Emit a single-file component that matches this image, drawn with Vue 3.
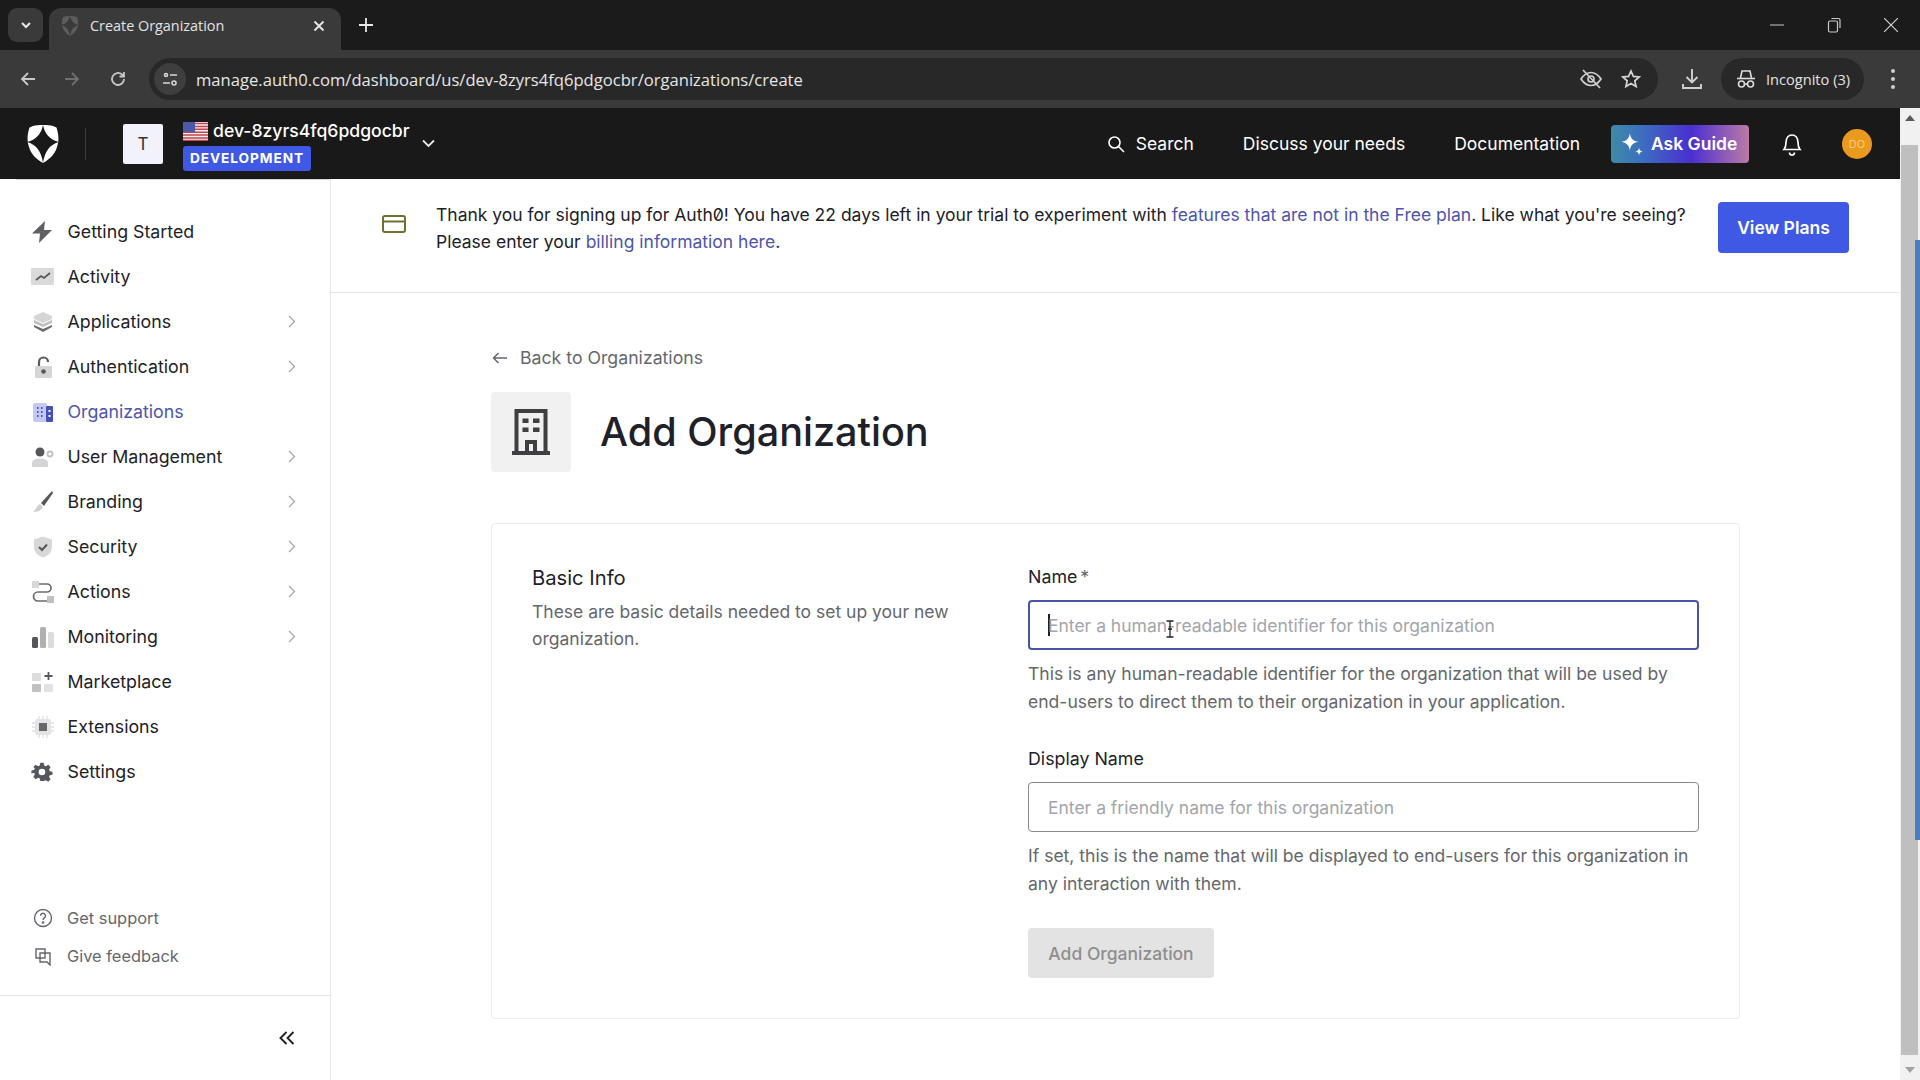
<template>
  <div class="page">
    <!-- browser chrome -->
    <div class="tabstrip">
      <div class="tab-menu">
        <svg width="12" height="12" viewBox="0 0 12 12" fill="none" stroke="#e8e8e8" stroke-width="2"><path d="M2 4l4 4 4-4" /></svg>
      </div>
      <div class="tab">
        <svg class="tab-fav" width="18" height="20" viewBox="0 0 32 38" fill="#5c5c5c"><path fill-rule="evenodd" d="M6 1C11-.3 21-.3 26 1l3.500 1.500C32 10 32 16 30 22c-2 7-7 12-14 16C9 34 4 29 2 22 0 16 0 10 2.500 2.500zM16 0q2.500 13.500 16 17-13.500 3.500-16 21-2.500-17.500-16-21Q13.500 13.500 16 0z" /></svg>
        <span class="tab-title">Create Organization</span>
        <svg class="tab-x" width="12" height="12" viewBox="0 0 12 12" stroke="#e8e8e8" stroke-width="1.8"><path d="M1.5 1.5l9 9M10.5 1.5l-9 9" /></svg>
      </div>
      <svg class="tab-plus" width="14" height="14" viewBox="0 0 14 14" stroke="#e8e8e8" stroke-width="1.8"><path d="M7 0v14M0 7h14" /></svg>
      <div class="win-btns">
        <svg width="14" height="14" viewBox="0 0 14 14" stroke="#c8c8c8" stroke-width="1"><path d="M0 7h14" /></svg>
        <svg width="14" height="16" viewBox="0 0 14 16" fill="none" stroke="#c8c8c8" stroke-width="1.2"><rect x="1.5" y="4" width="9" height="11" rx="1.5" /><path d="M4.5 1.5h7a1.5 1.5 0 0 1 1.5 1.5v8" /></svg>
        <svg width="14" height="14" viewBox="0 0 14 14" stroke="#d8d8d8" stroke-width="1.1"><path d="M0 0l14 14M14 0L0 14" /></svg>
      </div>
    </div>
    <div class="toolbar">
      <svg class="tb-ic" width="18" height="18" viewBox="0 0 18 18" fill="none" stroke="#c7c7c7" stroke-width="1.8"><path d="M16 9H3M9 3L3 9l6 6" /></svg>
      <svg class="tb-ic" width="18" height="18" viewBox="0 0 18 18" fill="none" stroke="#6f6f6f" stroke-width="1.8"><path d="M2 9h13M9 3l6 6-6 6" /></svg>
      <svg class="tb-ic reload" width="18" height="18" viewBox="0 0 18 18" fill="none" stroke="#c7c7c7" stroke-width="1.8"><path d="M15 9a6 6 0 1 1-2-4.5L15 6.5M15 2v4.500h-4.500" /></svg>
      <div class="omnibox">
        <div class="site-ic">
          <svg width="18" height="18" viewBox="0 0 18 18" fill="none" stroke="#d6d6d6" stroke-width="1.6"><circle cx="5" cy="5" r="1.5" /><path d="M9 5h7M2 13h7" /><circle cx="13" cy="13" r="2" /></svg>
        </div>
        <span class="url">manage.auth0.com/dashboard/us/dev-8zyrs4fq6pdgocbr/organizations/create</span>
        <svg class="omni-eye" width="24" height="20" viewBox="0 0 24 20" fill="none" stroke="#cfcfcf" stroke-width="1.7"><path d="M2 10c3-4.500 6-6.500 10-6.500s7 2 10 6.500c-3 4.500-6 6.500-10 6.500S5 14.500 2 10z" /><circle cx="12" cy="10" r="3" /><path d="M4 1l17 18" /></svg>
        <svg class="omni-star" width="20" height="20" viewBox="0 0 20 20" fill="none" stroke="#d6d6d6" stroke-width="1.7"><path d="M10 2l2.400 5.400 5.800.6-4.400 3.900 1.300 5.700L10 14.600l-5.100 3 1.300-5.700L1.800 8l5.800-.6z" /></svg>
      </div>
      <svg class="dl-ic" width="20" height="22" viewBox="0 0 20 22" fill="none" stroke="#d0d0d0" stroke-width="1.9"><path d="M10 1v13M4.500 9l5.500 5.500L15.500 9M1 16v4h18v-4" /></svg>
      <div class="incognito">
        <svg width="20" height="20" viewBox="0 0 20 20" fill="none" stroke="#dcdcdc" stroke-width="1.6"><path d="M1 9.500h18" /><path d="M4.500 9l1.500-7h8l1.500 7" /><circle cx="5.500" cy="15" r="3" /><circle cx="14.500" cy="15" r="3" /><path d="M8.500 15h3" /></svg>
        <span>Incognito (3)</span>
      </div>
      <svg class="kebab" width="6" height="22" viewBox="0 0 6 22" fill="#d0d0d0"><circle cx="3" cy="3" r="2" /><circle cx="3" cy="11" r="2" /><circle cx="3" cy="19" r="2" /></svg>
    </div>

    <div class="viewport">
      <div class="app">
        <header class="topbar">
          <svg class="logo" width="32" height="38" viewBox="0 0 32 38" fill="#fff">
            <path fill-rule="evenodd" d="M6 1C11-.3 21-.3 26 1l3.500 1.500C32 10 32 16 30 22c-2 7-7 12-14 16C9 34 4 29 2 22 0 16 0 10 2.500 2.500zM16 0q2.500 13.500 16 17-13.500 3.500-16 21-2.500-17.500-16-21Q13.500 13.500 16 0z" />
          </svg>
          <span class="logo-sep"></span>
          <div class="tenant-box">T</div>
          <div class="tenant">
            <div class="tenant-name">
              <svg width="25" height="19" viewBox="0 0 25 19">
                <rect width="25" height="19" fill="#eef0f4" />
                <path d="M0 1.500h25M0 4.400h25M0 7.300h25M0 10.200h25M0 13.100h25M0 16h25M0 18.500h25" stroke="#c8424a" stroke-width="1.500" />
                <rect width="12" height="10" fill="#4a5aa8" />
              </svg>
              <span>dev-8zyrs4fq6pdgocbr</span>
            </div>
            <span class="tenant-tag">DEVELOPMENT</span>
          </div>
          <svg class="tenant-chev" width="13" height="9" viewBox="0 0 13 9" fill="none" stroke="#e8e8e8" stroke-width="1.8"><path d="M1 1.500l5.500 5.500L12 1.500" /></svg>
          <div class="top-links">
            <a class="top-link search">
              <svg width="18" height="18" viewBox="0 0 18 18" fill="none" stroke="#fff" stroke-width="1.600"><circle cx="7.500" cy="7.500" r="5.500" /><path d="M11.500 11.500L17 17" /></svg>
              Search
            </a>
            <a class="top-link">Discuss your needs</a>
            <a class="top-link">Documentation</a>
            <button class="ask">
              <svg width="26" height="26" viewBox="0 0 24 24" fill="#fff"><path d="M10 2c.8 5 3 7.200 8 8-5 .8-7.200 3-8 8-.8-5-3-7.200-8-8 5-.8 7.200-3 8-8zM18.500 15.500c.3 2.200 1.300 3.200 3.500 3.500-2.200.3-3.200 1.300-3.500 3.500-.3-2.200-1.300-3.200-3.500-3.500 2.200-.3 3.200-1.300 3.500-3.500z" /></svg>
              Ask Guide
            </button>
            <svg class="bell" width="20" height="24" viewBox="0 0 20 24" fill="none" stroke="#fff" stroke-width="1.700"><path d="M2 17.500h16c-1.500-1.800-2-3.500-2-7C16 6 13.500 3 10 3S4 6 4 10.500c0 3.500-.5 5.200-2 7z" /><path d="M7.500 20.500a2.500 2.500 0 0 0 5 0" /></svg>
            <div class="avatar">DO</div>
          </div>
        </header>

        <div class="body">
          <aside class="sidebar">
            <nav class="nav">
              <a v-for="item in navItems" :key="item.label" class="nav-item" :class="{ active: item.active }">
                <svg class="nav-ic" width="24" height="24" viewBox="0 0 24 24" v-html="item.icon"></svg>
                <span class="nav-label">{{ item.label }}</span>
                <svg v-if="item.arrow" class="nav-arrow" width="8" height="13" viewBox="0 0 8 13" fill="none" stroke="#a8a8a8" stroke-width="1.300"><path d="M1 1l5.500 5.500L1 12" /></svg>
              </a>
            </nav>
            <div class="side-foot">
              <a class="foot-link">
                <svg width="20" height="20" viewBox="0 0 20 20" fill="none" stroke="#65676e" stroke-width="1.400"><circle cx="10" cy="10" r="8.500" /><path d="M7.500 7.800a2.500 2.500 0 1 1 3.800 2.100c-.9.600-1.300 1-1.300 2" /><circle cx="10" cy="14.500" r=".6" fill="#65676e" /></svg>
                Get support
              </a>
              <a class="foot-link">
                <svg width="20" height="20" viewBox="0 0 20 20" fill="none" stroke="#65676e" stroke-width="1.400"><path d="M3 3h9v9H6l-3 0z" /><path d="M7 7h10v9v3l-3-3H7z" /></svg>
                Give feedback
              </a>
            </div>
            <div class="collapse">
              <svg width="16" height="14" viewBox="0 0 16 14" fill="none" stroke="#1e212a" stroke-width="1.900"><path d="M7.500 1L1.500 7l6 6M14.500 1l-6 6 6 6" /></svg>
            </div>
          </aside>

          <main class="main">
            <div class="banner">
              <svg class="banner-ic" width="24" height="20" viewBox="0 0 24 20" fill="none" stroke="#6d7030" stroke-width="2"><rect x="1" y="2" width="22" height="16" rx="2" /><path d="M1 7.500h22" /></svg>
              <p class="banner-text">Thank you for signing up for Auth0! You have 22 days left in your trial to experiment with <a>features that are not in the Free plan</a>. Like what you're seeing? Please enter your <a>billing information here</a>.</p>
              <button class="plans">View Plans</button>
            </div>

            <div class="content">
              <a class="back">
                <svg width="15" height="12" viewBox="0 0 15 12" fill="none" stroke="#65676e" stroke-width="1.500"><path d="M15 6H1.500M6.500 1L1.500 6l5 5" /></svg>
                Back to Organizations
              </a>
              <div class="title-row">
                <div class="title-ic">
                  <svg width="38" height="46" viewBox="0 0 38 46" fill="#3f3f41"><path fill-rule="evenodd" d="M2.500 0h33v42H38v4H0v-4h2.500zM6.500 4v38H13V31h12v11h6.500V4zM10.500 9.500h6v4.500h-6zM21 9.500h6.500v4.500H21zM10.500 18.500h6V23h-6zM21 18.500h6.500V23H21zM17 35v7h4v-7z" /></svg>
                </div>
                <h1 class="title">Add Organization</h1>
              </div>
              <section class="card">
                <div class="card-left">
                  <h2 class="card-title">Basic Info</h2>
                  <p class="card-desc">These are basic details needed to set up your new organization.</p>
                </div>
                <form class="form" @submit.prevent>
                  <label class="label">Name<span class="req">*</span></label>
                  <div class="fake-input focused">
                    <span class="caret"></span>
                    <span class="ph">Enter a human-readable identifier for this organization</span>
                    <svg class="ibeam" width="10" height="18" viewBox="0 0 10 18" fill="none" stroke="#222" stroke-width="1.300"><path d="M1.500 1h7M1.500 17h7M5 1v16M3 9h4" /></svg>
                  </div>
                  <p class="help">This is any human-readable identifier for the organization that will be used by end-users to direct them to their organization in your application.</p>
                  <label class="label second">Display Name</label>
                  <div class="fake-input">
                    <span class="ph">Enter a friendly name for this organization</span>
                  </div>
                  <p class="help">If set, this is the name that will be displayed to end-users for this organization in any interaction with them.</p>
                  <button class="submit" disabled>Add Organization</button>
                </form>
              </section>
            </div>
          </main>
        </div>
      </div>
      <div class="scrollbar">
        <div class="sb-btn"><span class="tri up"></span></div>
        <div class="sb-track">
          <div class="sb-thumb"></div>
          <span class="sb-mark"></span>
        </div>
        <div class="sb-btn"><span class="tri down"></span></div>
      </div>
    </div>
  </div>
</template>

<script setup>
const navItems = [
  { label: "Getting Started", icon: '<path d="M14 1L1 13.500h8L8 23l13-13h-8z" fill="#5f6064"/>' },
  { label: "Activity", icon: '<rect x="0" y="3" width="23" height="17" rx="1" fill="#dadada"/><path d="M5 15l5-4 3 2 6-5" fill="none" stroke="#55575c" stroke-width="1.800"/>' },
  { label: "Applications", arrow: true, icon: '<path d="M12 2l9 4v3l-9 4-9-4V6z" fill="#d5d5d5"/><path d="M3 10l9 4 9-4v3l-9 4-9-4z" fill="#c0c0c0"/><path d="M3 15l9 4 9-4v2l-9 5-9-5z" fill="#6a6c70"/>' },
  { label: "Authentication", arrow: true, icon: '<path d="M8 11V7a4.500 4.500 0 0 1 9 0" fill="none" stroke="#5a5c60" stroke-width="2.200"/><rect x="4" y="11" width="17" height="12" rx="1.500" fill="#d5d5d5"/><circle cx="12.500" cy="16.500" r="2.300" fill="#55575c"/>' },
  { label: "Organizations", active: true, icon: '<rect x="2" y="3" width="14" height="19" rx="2" fill="#c5c9f2"/><rect x="15" y="6" width="7" height="16" rx="1" fill="#4451b8"/><path d="M6 8h1.500M10 8h1.500M6 12h1.500M10 12h1.500M6 16h1.500M10 16h1.500" stroke="#4451b8" stroke-width="1.800"/><path d="M17.500 11h2M17.500 16h2" stroke="#fff" stroke-width="1.800"/>' },
  { label: "User Management", arrow: true, icon: '<circle cx="9" cy="7" r="4.500" fill="#55575c"/><path d="M1 22v-4c0-3 3-4.500 8-4.500s8 1.500 8 4.500v4z" fill="#d5d5d5"/><circle cx="19" cy="9" r="2.500" fill="none" stroke="#c0c0c0" stroke-width="1.800"/>' },
  { label: "Branding", arrow: true, icon: '<path d="M21 1L10 13l3 3L22 3z" fill="#55575c"/><path d="M9 14l3 3c-2 4-6 5-10 5 3-2 3-6 7-8z" fill="#cfcfcf"/>' },
  { label: "Security", arrow: true, icon: '<path d="M12 1.500l9 3V12c0 5.500-4 9-9 10.500C7 21 3 17.500 3 12V4.500z" fill="#d8d8d8"/><path d="M8 12l3 3 5-5.500" fill="none" stroke="#55575c" stroke-width="2"/>' },
  { label: "Actions", arrow: true, icon: '<rect x="1" y="1" width="7" height="7" fill="#d8d8d8"/><rect x="16" y="16" width="7" height="7" fill="#c0c0c0"/><path d="M8 4h8a4 4 0 0 1 0 8H7a4.500 4.500 0 0 0 0 9h9" fill="none" stroke="#6a6c70" stroke-width="1.700"/>' },
  { label: "Monitoring", arrow: true, icon: '<rect x="1" y="12" width="6" height="11" rx="1.500" fill="#55575c"/><rect x="9" y="2" width="6" height="21" rx="1.500" fill="#b0b0b0"/><rect x="17" y="7" width="6" height="16" rx="1.500" fill="#dcdcdc"/>' },
  { label: "Marketplace", icon: '<rect x="1" y="3" width="9" height="8" rx="1" fill="#dcdcdc"/><rect x="1" y="14" width="9" height="8" rx="1" fill="#c0c0c0"/><rect x="13" y="14" width="9" height="8" rx="1" fill="#e2e2e2"/><path d="M17.500 2v8M13.500 6h8" stroke="#55575c" stroke-width="1.800"/>' },
  { label: "Extensions", icon: '<rect x="4" y="4" width="16" height="16" rx="2" fill="#e4e4e4"/><rect x="8" y="8" width="8" height="8" fill="#65676b"/><path d="M8 1v3M12 1v3M16 1v3M8 20v3M12 20v3M16 20v3M1 8h3M1 12h3M1 16h3M20 8h3M20 12h3M20 16h3" stroke="#e0e0e0" stroke-width="1.300"/>' },
  { label: "Settings", icon: '<path transform="translate(1 2) scale(.83)" fill-rule="evenodd" d="M10 1h4l.7 3.300 2 .8L19.600 3.300l2.800 2.800-1.800 2.900.8 2 3.300.7v3.600l-3.300.7-.8 2 1.800 2.900-2.800 2.800-2.900-1.800-2 .8L14 23h-4l-.7-3.300-2-.8-2.900 1.800-2.800-2.800 1.800-2.900-.8-2L-.7 13.800v-3.600l3.300-.7.800-2L1.600 6.100l2.800-2.800 2.900 1.800 2-.8zM12 8a4 4 0 1 0 0 8 4 4 0 0 0 0-8z" fill="#55575c"/>' },
];
</script>

<style scoped>
.page {
  width: 1920px;
  height: 1080px;
  overflow: hidden;
  display: flex;
  flex-direction: column;
  font-family: Inter, "Liberation Sans", sans-serif;
  color: #1e212a;
  background: #fff;
}

/* chrome */
.tabstrip {
  height: 50px;
  background: #1b1b1b;
  display: flex;
  align-items: flex-end;
  flex: none;
}

.tab-menu {
  width: 35px;
  height: 34px;
  margin: 0 6px 8px 8px;
  background: #3a3a3a;
  border-radius: 9px;
  display: flex;
  align-items: center;
  justify-content: center;
}

.tab {
  width: 292px;
  height: 42px;
  background: #3a3a3a;
  border-radius: 12px 12px 0 0;
  display: flex;
  align-items: center;
  padding: 0 16px 7px 12px;
  box-sizing: border-box;
}

.tab-fav {
  margin-right: 11px;
}

.tab-title {
  flex: 1;
  font-family: "Open Sans", sans-serif;
  font-size: 14.4px;
  color: #e3e3e3;
}

.tab-plus {
  margin: 0 0 18px 18px;
}

.win-btns {
  margin-left: auto;
  width: 150px;
  height: 50px;
  display: flex;
  align-items: center;
  justify-content: space-between;
  padding: 0 22px 0 0;
  box-sizing: border-box;
}

.toolbar {
  height: 58px;
  background: #3a3a3a;
  display: flex;
  align-items: center;
  flex: none;
}

.tb-ic {
  margin-left: 19px;
  flex: none;
}

.tb-ic + .tb-ic {
  margin-left: 26px;
}

.tb-ic.reload {
  margin-left: 28px;
}

.omnibox {
  width: 1509px;
  height: 42px;
  margin-left: 22px;
  background: #282828;
  border-radius: 21px;
  display: flex;
  align-items: center;
  box-sizing: border-box;
  padding-right: 17px;
  flex: none;
}

.site-ic {
  width: 32px;
  height: 32px;
  margin-left: 5px;
  background: #3e3e3e;
  border-radius: 50%;
  display: flex;
  align-items: center;
  justify-content: center;
}

.url {
  margin-left: 10px;
  font-family: "Open Sans", sans-serif;
  font-size: 16.6px;
  color: #e6e6e6;
  flex: 1;
}

.omni-eye {
  margin-right: 18px;
}

.dl-ic {
  margin-left: 24px;
  flex: none;
}

.incognito {
  width: 143px;
  height: 42px;
  margin-left: 19px;
  background: #282828;
  border-radius: 21px;
  display: flex;
  align-items: center;
  padding-left: 15px;
  box-sizing: border-box;
  gap: 10px;
  font-family: "Open Sans", sans-serif;
  font-size: 14.6px;
  color: #e3e3e3;
  flex: none;
}

.kebab {
  margin-left: 26px;
  flex: none;
}

.viewport {
  flex: 1;
  display: flex;
  min-height: 0;
}

.app {
  flex: 1;
  display: flex;
  flex-direction: column;
  min-width: 0;
}

/* header */
.topbar {
  height: 71px;
  background: #191919;
  display: flex;
  align-items: center;
  padding: 0 28px 0 27px;
  flex: none;
}

.logo {
  flex: none;
}

.logo-sep {
  width: 1px;
  height: 32px;
  background: #3c3c3c;
  margin: 0 37px 0 26px;
}

.tenant-box {
  width: 40px;
  height: 40px;
  background: #f1f2fa;
  border-radius: 2px;
  color: #333;
  font-size: 17px;
  display: flex;
  align-items: center;
  justify-content: center;
  margin-right: 20px;
}

.tenant {
  display: flex;
  flex-direction: column;
  align-items: flex-start;
  gap: 4px;
  margin-top: 4px;
}

.tenant-name {
  display: flex;
  align-items: center;
  gap: 5px;
  font-size: 17.6px;
  font-weight: 500;
  color: #fff;
  line-height: 22px;
}

.tenant-tag {
  background: #3f59e4;
  color: #fff;
  font-size: 13.7px;
  font-weight: 700;
  letter-spacing: 0.9px;
  line-height: 25px;
  padding: 0 7px;
  border-radius: 3px;
}

.tenant-chev {
  margin-left: 12px;
}

.top-links {
  margin-left: auto;
  display: flex;
  align-items: center;
}

.top-link {
  display: flex;
  align-items: center;
  gap: 11px;
  font-size: 17.5px;
  color: #fff;
  margin-right: 49px;
}

.ask {
  width: 138px;
  height: 38px;
  border: none;
  border-radius: 4px;
  background: linear-gradient(90deg, #3f8aa6 0%, #3c6fc0 22%, #4a2fd0 58%, #bc7aa6 100%);
  color: #fff;
  font-family: inherit;
  font-size: 17.5px;
  font-weight: 600;
  display: flex;
  align-items: center;
  gap: 6px;
  padding: 0 0 0 8px;
  margin-left: -18px;
}

.bell {
  margin-left: 33px;
}

.avatar {
  width: 30px;
  height: 30px;
  margin-left: 40px;
  border-radius: 50%;
  background: #ea9a1c;
  color: #f2c888;
  font-size: 11px;
  display: flex;
  align-items: center;
  justify-content: center;
}

.body {
  flex: 1;
  display: flex;
  min-height: 0;
}

/* sidebar */
.sidebar {
  width: 331px;
  flex: none;
  box-sizing: border-box;
  border-right: 1px solid #e6e6e6;
  display: flex;
  flex-direction: column;
}

.nav {
  padding-top: 29px;
  margin-left: 16px;
  border-top: 1px solid #d4d4d4;
  flex: 1;
}

.nav-item {
  height: 45px;
  display: flex;
  align-items: center;
  padding: 0 34px 0 15px;
  font-size: 17.8px;
  color: #1e212a;
}

.nav-item.active {
  color: #4d55ac;
}

.nav-ic {
  flex: none;
  margin-right: 12.5px;
  overflow: visible;
}

.nav-label {
  flex: 1;
}

.side-foot {
  display: flex;
  flex-direction: column;
  gap: 18px;
  padding: 0 0 29px 33px;
  border-bottom: 1px solid #e6e6e6;
}

.foot-link {
  display: flex;
  align-items: center;
  gap: 14px;
  font-size: 16.4px;
  line-height: 20px;
  color: #65676e;
}

.collapse {
  height: 84px;
  flex: none;
  display: flex;
  align-items: center;
  justify-content: flex-end;
  padding-right: 35px;
  box-sizing: border-box;
}

/* main */
.main {
  flex: 1;
  min-width: 0;
}

.banner {
  height: 114px;
  box-sizing: border-box;
  border-bottom: 1px solid #e6e6e6;
  display: flex;
  align-items: flex-start;
  padding: 22px 51px 0 51px;
}

.banner-ic {
  flex: none;
  margin: 13px 30px 0 0;
}

.banner-text {
  flex: 1;
  margin: 0;
  font-size: 17.5px;
  line-height: 27px;
  color: #1e212a;
  font-feature-settings: "zero";
}

.banner-text a {
  color: #4d55ac;
}

.plans {
  width: 131px;
  height: 51px;
  margin: 1px 0 0 24px;
  border: none;
  border-radius: 4px;
  background: #3f59e4;
  color: #fff;
  font-family: inherit;
  font-size: 17.5px;
  font-weight: 600;
  flex: none;
}

.content {
  width: 1249px;
  margin-left: 160px;
}

.back {
  display: flex;
  align-items: center;
  gap: 13px;
  margin-top: 51px;
  padding-left: 1px;
  font-size: 17.7px;
  line-height: 27px;
  color: #65676e;
}

.title-row {
  display: flex;
  align-items: center;
  margin-top: 21px;
}

.title-ic {
  width: 80px;
  height: 80px;
  background: #f1f1f1;
  border-radius: 4px;
  display: flex;
  align-items: center;
  justify-content: center;
  margin-right: 29px;
}

.title {
  margin: 0;
  font-size: 39.600px;
  font-weight: 500;
  color: #1e212a;
}

.card {
  margin-top: 51px;
  height: 496px;
  box-sizing: border-box;
  border: 1px solid #ececec;
  border-radius: 4px;
  display: grid;
  grid-template-columns: 496px 671px;
  padding: 40px 0 0 40px;
}

.card-title {
  margin: 0;
  font-size: 20.2px;
  font-weight: 400;
  line-height: 28px;
}

.card-desc {
  margin: 6px 0 0;
  width: 440px;
  font-size: 17.5px;
  line-height: 27px;
  color: #65676e;
}

.form {
  display: flex;
  flex-direction: column;
  align-items: flex-start;
}

.label {
  font-size: 17.8px;
  font-weight: 400;
  line-height: 27px;
  color: #1e212a;
  margin-top: -1px;
}

.label.second {
  margin-top: 30px;
}

.req {
  color: #65676e;
  margin-left: 3px;
}

.fake-input {
  position: relative;
  width: 100%;
  height: 50px;
  margin-top: 10px;
  box-sizing: border-box;
  border: 1px solid #8a8a8e;
  border-radius: 4px;
  display: flex;
  align-items: center;
  padding-left: 19px;
  font-size: 17.5px;
}

.fake-input.focused {
  border: 2px solid #4a52a8;
  padding-left: 18px;
  margin-top: 10px;
}

.ph {
  color: #a3a5aa;
}

.caret {
  width: 2px;
  height: 22px;
  background: #1e212a;
  margin-right: -2px;
}

.ibeam {
  position: absolute;
  left: 135px;
  top: 18px;
}

.help {
  margin: 10px 0 0;
  font-size: 17.55px;
  line-height: 27.500px;
  color: #65676e;
}

.submit {
  margin-top: 31px;
  width: 186px;
  height: 50px;
  border: none;
  border-radius: 4px;
  background: #e3e3e3;
  color: #8e8e8e;
  font-family: inherit;
  font-size: 17.5px;
  font-weight: 500;
}

/* scrollbar */
.scrollbar {
  width: 20px;
  flex: none;
  background: #f1f1f1;
  display: flex;
  flex-direction: column;
}

.sb-btn {
  height: 20px;
  flex: none;
  display: flex;
  align-items: center;
  justify-content: center;
}

.tri {
  width: 0;
  height: 0;
  border-left: 5px solid transparent;
  border-right: 5px solid transparent;
}

.tri.up {
  border-bottom: 6px solid #5a5a5a;
}

.tri.down {
  border-top: 6px solid #a3a3a3;
}

.sb-track {
  position: relative;
  flex: 1;
  padding: 17px 2px 0 1px;
  box-sizing: border-box;
}

.sb-thumb {
  height: 910px;
  background: #bfbfbf;
}

.sb-mark {
  position: absolute;
  right: 0;
  top: 112px;
  width: 5px;
  height: 600px;
  background: #4a7cc0;
}
</style>

<style>
body {
  margin: 0;
  overflow: hidden;
}
</style>
